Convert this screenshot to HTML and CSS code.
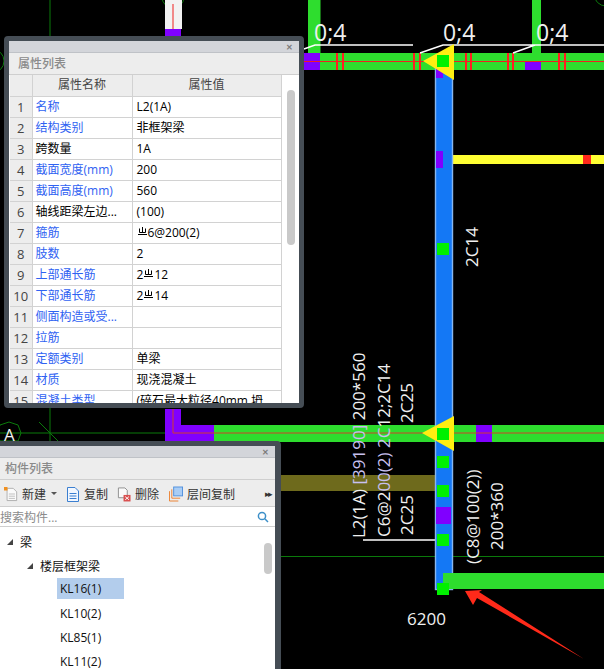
FILE: index.html
```html
<!DOCTYPE html>
<html lang="zh">
<head>
<meta charset="utf-8">
<title>属性列表</title>
<link rel="stylesheet" href="styles.css">
</head>
<body>
<main class="desktop">
<svg class="cad" width="604" height="669" viewBox="0 0 604 669">
  <g class="thin-green">
    <circle cx="173" cy="-3" r="11"/>
    <circle cx="-8" cy="61" r="12"/>
    <circle cx="606" cy="-6" r="12"/>
    <polygon points="9,422 18,425 21,433 18,441 0,441 -3,433 0,425"/>
    <path d="M50 0V441M39 422L58 441M0 433H173M275 556.5H604"/>
  </g>
  <rect class="white-col" x="165" y="0" width="17" height="29"/>
  <rect class="purple" x="165" y="29" width="16" height="8"/>
  <path class="red-line" d="M173 4V29"/>

  <rect class="green" x="308" y="0" width="12.5" height="53"/>
  <rect class="green" x="532" y="0" width="9" height="53"/>
  <rect class="green" x="304" y="53" width="300" height="17"/>
  <rect class="purple" x="304" y="53" width="16" height="17"/>
  <rect class="purple" x="525" y="61" width="16" height="9"/>
  <path class="red-line" d="M304 61.5H604"/>
  <path class="red-tick" d="M337 53V70M343 53V70M414 53V70M420 53V70M466 53V70M471 53V70M508 53V70M513 53V70M559 53V70M565 53V70"/>
  <path class="leader" d="M304 49L315 45H413M420 53L443 45H604M513 53L535 45"/>

  <rect class="bar-yellow" x="453" y="155" width="151" height="9"/>
  <rect class="red" x="583" y="155" width="8" height="9"/>

  <rect class="purple" x="165" y="409" width="16" height="32"/>
  <rect class="purple" x="165" y="425" width="49" height="16"/>
  <rect class="green" x="214" y="425" width="390" height="17"/>
  <rect class="purple" x="476" y="425" width="16" height="17"/>
  <path class="red-line dim" d="M173 409V433H604"/>
  <rect class="olive" x="275" y="475" width="160" height="16"/>
  <path class="leader" d="M363 540H435"/>

  <rect class="blue" x="435.5" y="60.5" width="17" height="529"/>
  <rect class="green" x="443" y="573" width="161" height="16"/>
  <rect class="purple" x="436" y="68" width="7" height="10"/>
  <rect class="purple" x="436" y="151" width="7" height="17"/>
  <rect class="purple" x="436" y="507" width="15" height="17"/>

  <polygon class="yellow" points="423,61 454,44 454,80"/>
  <polygon class="yellow" points="422,433 454,416 454,451"/>
  <rect class="node" x="437" y="55" width="12" height="12"/>
  <rect class="node" x="437" y="243" width="12" height="12"/>
  <rect class="node" x="437" y="428" width="12" height="12"/>
  <rect class="node" x="437" y="456" width="12" height="12"/>
  <rect class="node" x="437" y="485" width="12" height="12"/>
  <rect class="node" x="437" y="534" width="12" height="12"/>
  <rect class="node" x="437" y="583" width="12" height="12"/>

  <text class="cad-text big" x="314" y="41">0;4</text>
  <text class="cad-text big" x="443" y="41">0;4</text>
  <text class="cad-text big" x="536" y="41">0;4</text>
  <text class="cad-text" x="407" y="625">6200</text>
  <text class="cad-text" x="4" y="441">A</text>
  <text class="cad-text" transform="translate(478 267) rotate(-90)">2C14</text>
  <text class="cad-text" transform="translate(365 538) rotate(-90)">L2(1A) <tspan class="pale">[39190]</tspan> 200*560</text>
  <text class="cad-text" transform="translate(390 537) rotate(-90)">C6@2<tspan class="pale">00(2) 2C</tspan>12;2C14</text>
  <text class="cad-text" transform="translate(413 423) rotate(-90)">2C25</text>
  <text class="cad-text" transform="translate(413 535) rotate(-90)">2C25</text>
  <text class="cad-text" transform="translate(479 564) rotate(-90)">(C8@100(2))</text>
  <text class="cad-text" transform="translate(503 550) rotate(-90)">200*360</text>

  <polygon class="red" points="465,591 482,590 479,592 584,659 477,598 473,605"/>
</svg>

<section class="panel props">
  <div class="titlebar"><span class="close">✕</span></div>
  <h2 class="heading">属性列表</h2>
  <div class="props-body">
    <table class="grid">
      <thead>
        <tr><th class="num"></th><th class="name">属性名称</th><th class="value">属性值</th></tr>
      </thead>
      <tbody>
        <tr><td class="num">1</td><td class="link">名称</td><td>L2(1A)</td></tr>
        <tr><td class="num">2</td><td class="link">结构类别</td><td>非框架梁</td></tr>
        <tr><td class="num">3</td><td>跨数量</td><td>1A</td></tr>
        <tr><td class="num">4</td><td class="link">截面宽度(mm)</td><td>200</td></tr>
        <tr><td class="num">5</td><td class="link">截面高度(mm)</td><td>560</td></tr>
        <tr><td class="num">6</td><td>轴线距梁左边...</td><td>(100)</td></tr>
        <tr><td class="num">7</td><td class="link">箍筋</td><td><svg class="rebar" viewBox="0 0 9 9"><path d="M1.5 1.5V5.5H7.5V1.5M4.5 0V5.5M0 7.5H9"/></svg>6@200(2)</td></tr>
        <tr><td class="num">8</td><td class="link">肢数</td><td>2</td></tr>
        <tr><td class="num">9</td><td class="link">上部通长筋</td><td>2<svg class="rebar" viewBox="0 0 9 9"><path d="M1.5 1.5V5.5H7.5V1.5M4.5 0V5.5M0 7.5H9"/></svg>12</td></tr>
        <tr><td class="num">10</td><td class="link">下部通长筋</td><td>2<svg class="rebar" viewBox="0 0 9 9"><path d="M1.5 1.5V5.5H7.5V1.5M4.5 0V5.5M0 7.5H9"/></svg>14</td></tr>
        <tr><td class="num">11</td><td class="link">侧面构造或受...</td><td></td></tr>
        <tr><td class="num">12</td><td class="link">拉筋</td><td></td></tr>
        <tr><td class="num">13</td><td class="link">定额类别</td><td>单梁</td></tr>
        <tr><td class="num">14</td><td class="link">材质</td><td>现浇混凝土</td></tr>
        <tr><td class="num">15</td><td class="link">混凝土类型</td><td>(碎石最大粒径40mm 坍</td></tr>
      </tbody>
    </table>
    <div class="scroll-track props-track"><div class="thumb props-thumb"></div></div>
  </div>
</section>

<section class="panel parts">
  <div class="titlebar"><span class="close">✕</span></div>
  <h2 class="heading">构件列表</h2>
  <div class="toolbar">
    <span class="tool tool-new">
      <svg class="icon" viewBox="0 0 16 16"><path class="doc" d="M3.5 1.5H10.5L14.5 5.5V15.5H3.5Z"/><path class="doc-lines" d="M5.5 8H12.5M5.5 10.5H12.5M5.5 13H12.5"/><rect class="spark" x="0" y="0" width="4" height="4"/></svg>新建<i class="caret"></i>
    </span>
    <span class="tool tool-copy">
      <svg class="icon" viewBox="0 0 14 16"><path class="doc-blue" d="M1.5 1.5H9L12.5 5V15.5H1.5Z"/><path class="doc-blue" d="M3.5 7.5H10.5M3.5 10H10.5M3.5 12.5H10.5"/></svg>复制
    </span>
    <span class="tool tool-del">
      <svg class="icon" viewBox="0 0 15 16"><path class="doc-grey" d="M1.5 1.5H8.5L11 4V12H1.5Z"/><rect class="del-box" x="7" y="9" width="7.5" height="7"/><path class="del-x" d="M8.8 10.8L12.8 14.2M12.8 10.8L8.8 14.2"/></svg>删除
    </span>
    <span class="tool tool-floor">
      <svg class="icon" viewBox="0 0 15 16"><path class="floor-back" d="M.5 15.5V5M.5 15.5H10M3 12.5V3M3 12.5H12"/><rect class="floor-front" x="5" y=".5" width="9.5" height="9.5"/></svg>层间复制
    </span>
    <span class="more">▸▸</span>
  </div>
  <div class="search"><span>搜索构件...</span>
    <svg class="search-icon" viewBox="0 0 12 12"><circle cx="5" cy="5" r="3.6"/><path d="M7.8 7.8L11 11"/></svg>
  </div>
  <div class="tree">
    <div class="tree-row lvl1"><i class="twist"></i>梁</div>
    <div class="tree-row lvl2"><i class="twist"></i>楼层框架梁</div>
    <div class="tree-row leaf selected">KL16(1)</div>
    <div class="tree-row leaf">KL10(2)</div>
    <div class="tree-row leaf">KL85(1)</div>
    <div class="tree-row leaf">KL11(2)</div>
    <div class="thumb parts-thumb"></div>
  </div>
</section>
</main>
</body>
</html>
```
FILE: styles.css
```css
* { box-sizing: border-box; }
html, body { margin: 0; padding: 0; background: #000; }
.desktop {
  position: relative;
  width: 604px;
  height: 669px;
  overflow: hidden;
  background: #000;
  font-family: "Open Sans", "Noto Sans CJK SC", sans-serif;
}
.cad { position: absolute; left: 0; top: 0; display: block; }
.thin-green { fill: none; stroke: #0b7a0b; stroke-width: 1; }
.white-col { fill: #f2f2f2; }
.purple { fill: #8000ff; }
.green { fill: #2edd2e; }
.yellow { fill: #ffee11; }
.bar-yellow { fill: #ffff33; }
.red { fill: #ff2a1a; }
.olive { fill: #6e6a1c; }
.red-line { fill: none; stroke: #f02020; stroke-width: 1; }
.red-line.dim { stroke: #d0402a; }
.red-tick { fill: none; stroke: #ff2020; stroke-width: 2; }
.leader { fill: none; stroke: #fff; stroke-width: 1.6; }
.blue { fill: #1478f5; stroke: #86b6ee; stroke-width: 1.4; }
.node { fill: #00f000; }
.cad-text { fill: #f0f0f0; font-family: "Open Sans", sans-serif; font-size: 17px; }
.cad-text.big { font-size: 23px; }
.pale { fill: #c8c0f0; }

.panel {
  position: absolute;
  display: flex;
  flex-direction: column;
  background: #ededed;
  border: 5px solid #454d55;
  border-radius: 4px;
  color: #000;
  font-size: 12px;
  overflow: hidden;
}
.props { left: 4px; top: 36px; width: 300px; height: 372px; }
.parts { left: -8px; top: 441px; width: 289px; height: 240px; border-right-width: 6px; }

.titlebar {
  flex: none;
  height: 12px;
  display: flex;
  justify-content: flex-end;
  align-items: center;
  padding-right: 6px;
  background: #d3d5da;
  border-bottom: 1px solid #bfc2c7;
}
.close { font-size: 8px; line-height: 12px; font-weight: 700; color: #7c7c7c; }
.heading {
  flex: none;
  height: 21px;
  margin: 0;
  padding-left: 8px;
  font-size: 12px;
  line-height: 21px;
  font-weight: 500;
  color: #8a8a8a;
}
.props .heading { padding-left: 9px; }
.props-body {
  flex: 1;
  min-height: 0;
  display: flex;
  padding-left: 1px;
  padding-right: 1px;
  background: #fff;
  overflow: hidden;
  border-top: 1px solid #cfcfcf;
}
.grid {
  flex: none;
  width: 271px;
  height: max-content;
  border-collapse: collapse;
  table-layout: fixed;
}
.grid th, .grid td {
  height: 21px;
  padding: 0 0 0 3px;
  border: 1px solid #d2d2d2;
  border-top: 0;
  font-weight: 400;
  white-space: nowrap;
  overflow: hidden;
  line-height: 20px;
}
.grid td:nth-child(3) { padding-left: 4px; }
.grid tr > :first-child { border-left: 0; }
.grid th { background: #ededed; text-align: center; color: #444; padding: 0; }
.grid th.num { width: 22px; }
.grid th.name { width: 100px; }
.grid th.value { width: 149px; }
.grid td.num { background: #ededed; text-align: center; padding: 0; color: #444; font-size: 13px; }
.grid td.link { color: #2f62f2; }
.rebar { display: inline-block; width: 9px; height: 9px; margin: 0 1px 3px; vertical-align: middle; fill: none; stroke: #000; stroke-width: 1; }

.scroll-track { flex: 1; display: flex; justify-content: center; background: #fff; }
.thumb { background: #c9c9c9; border-radius: 4px; width: 8px; }
.props-thumb { height: 155px; margin-top: 15px; margin-left: 2px; }

.toolbar {
  flex: none;
  height: 28px;
  display: flex;
  align-items: center;
  padding: 1px 0 0 7px;
  border-top: 1px solid #cfcfcf;
  border-bottom: 1px solid #cfcfcf;
  color: #333;
  white-space: nowrap;
}
.tool { display: flex; align-items: center; gap: 4px; }
.tool-copy { margin-left: 9px; }
.tool-del { margin-left: 9px; }
.tool-floor { margin-left: 10px; }
.icon { display: block; width: 14px; height: 16px; flex: none; }
.doc { fill: #fafafa; stroke: #a8a8a8; }
.doc-lines { fill: none; stroke: #b8b8b8; }
.spark { fill: #f09020; }
.doc-blue { fill: #f2f7ff; stroke: #3b7fd0; }
.doc-grey { fill: #fafafa; stroke: #8c8c8c; }
.del-box { fill: #d95050; }
.del-x { stroke: #fff; stroke-width: 1; fill: none; }
.floor-back { fill: none; stroke: #ec7d2a; }
.floor-front { fill: #a9cdf5; stroke: #4f8fdc; }
.caret { width: 0; height: 0; margin-left: 1px; border: 3px solid transparent; border-top: 3px solid #555; border-bottom: 0; }
.more { margin-left: 30px; font-size: 9px; letter-spacing: -2px; color: #333; }

.search {
  flex: none;
  height: 20px;
  display: flex;
  align-items: center;
  justify-content: space-between;
  padding: 0 6px 0 3px;
  background: #fff;
  border-bottom: 1px solid #cfcfcf;
  color: #8c8c8c;
}
.search-icon { width: 12px; height: 12px; fill: none; stroke: #3c8fc8; stroke-width: 1.5; }

.tree {
  position: relative;
  flex: 1;
  background: #fff;
  padding-top: 3px;
}
.tree-row { display: flex; align-items: center; height: 24px; white-space: nowrap; color: #111; }
.lvl1 { padding-left: 10px; }
.lvl2 { padding-left: 30px; }
.twist {
  width: 0;
  height: 0;
  margin-right: 7px;
  border-left: 6px solid transparent;
  border-bottom: 6px solid #444;
}
.leaf { margin-left: 60px; width: 67px; height: 24px; padding-left: 3px; }
.selected { height: 21px; margin-bottom: 2px; background: #b3cdec; }
.parts-thumb { position: absolute; left: 267px; top: 16px; height: 31px; }
```
